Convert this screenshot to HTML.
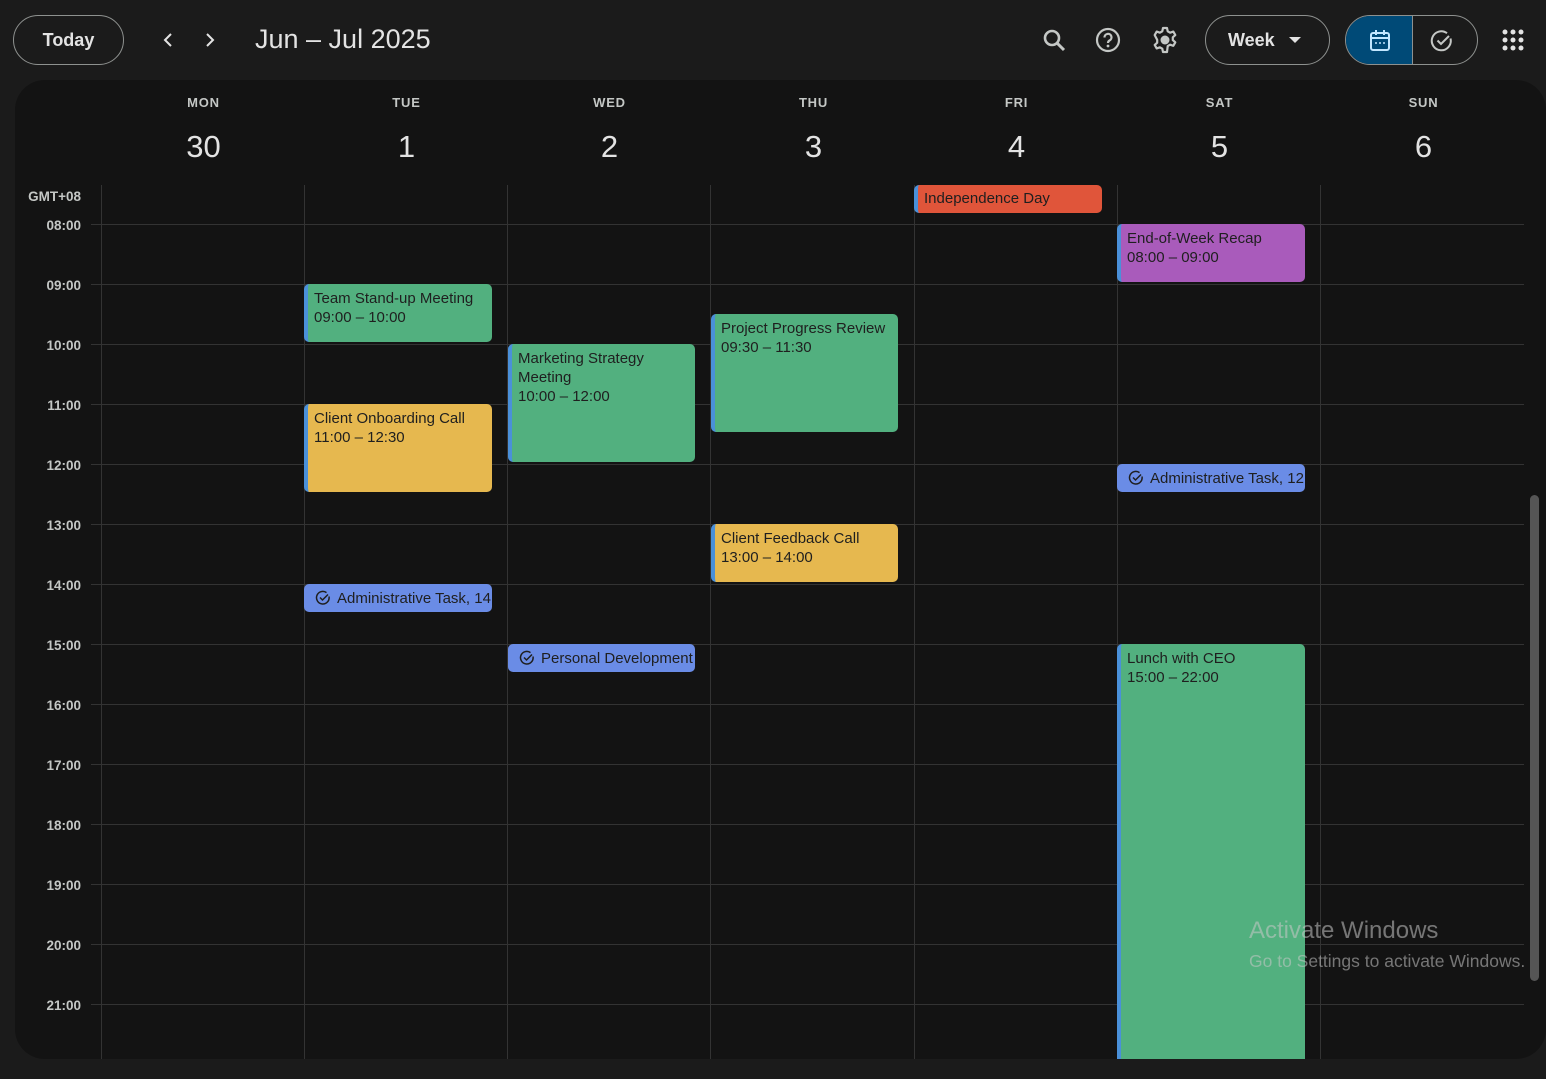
<!DOCTYPE html>
<html><head><style>
*{margin:0;padding:0;box-sizing:border-box}
body{width:1546px;height:1079px;background:#1b1b1b;font-family:"Liberation Sans",sans-serif;position:relative;overflow:hidden;color:#e3e3e3}
.a{position:absolute}
.panel{left:15px;top:80px;width:1531px;height:979px;background:#131313;border-radius:30px 30px 30px 30px}
.hl{position:absolute;left:91px;width:1433px;height:1px;background:#333}
.vl{position:absolute;top:185px;height:874px;width:1px;background:#333}
.tl{position:absolute;left:15px;width:66px;text-align:right;font-size:13.5px;font-weight:bold;color:#c4c7c5}
.dn{position:absolute;width:203px;text-align:center;font-size:13px;font-weight:bold;color:#c4c7c5;top:95px;letter-spacing:.8px}
.dd{position:absolute;width:203px;text-align:center;font-size:31px;color:#e3e3e3;top:129px}
.ev{position:absolute;width:188px;border-radius:5px;border-left:4px solid #4a90d9;padding:5px 0 0 6px;font-size:15px;line-height:19px;color:#1f1f1f;overflow:hidden;white-space:nowrap}
.g{background:#52b07f}.y{background:#e6b84f}.p{background:#a95bbb}
.t{background:#6a8ce6;border-left:none;border-radius:5px;height:28px;padding:0 0 0 11px;display:flex;align-items:center;gap:6px}
.t svg{flex:none}
.btn{position:absolute;border:1px solid #8e918f;border-radius:25px;height:50px}
</style></head><body>
<div class="btn" style="left:13px;top:15px;width:111px;"></div>
<div class="a" style="left:13px;top:30px;width:111px;text-align:center;font-size:18px;font-weight:bold">Today</div>
<svg class="a" style="left:160px;top:31px" width="18" height="18" viewBox="0 0 18 18"><path d="M11 3 5 9l6 6" stroke="#e3e3e3" stroke-width="2" fill="none"/></svg>
<svg class="a" style="left:200px;top:31px" width="18" height="18" viewBox="0 0 18 18"><path d="M7 3l6 6-6 6" stroke="#e3e3e3" stroke-width="2" fill="none"/></svg>
<div class="a" style="left:255px;top:24px;font-size:27px;color:#e3e3e3">Jun – Jul 2025</div>
<svg class="a" style="left:1042px;top:28px" width="26" height="26" viewBox="0 0 26 26"><circle cx="10" cy="10" r="7" stroke="#c4c7c5" stroke-width="2.6" fill="none"/><path d="M15 15l7 7" stroke="#c4c7c5" stroke-width="3"/></svg>
<svg class="a" style="left:1095px;top:27px" width="26" height="26" viewBox="0 0 26 26"><circle cx="13" cy="13" r="11" stroke="#c4c7c5" stroke-width="2.2" fill="none"/><path d="M9.5 10.5a3.5 3.5 0 1 1 5 3c-1.2.7-1.5 1.3-1.5 2.5" stroke="#c4c7c5" stroke-width="2.2" fill="none"/><circle cx="13" cy="19" r="1.4" fill="#c4c7c5"/></svg>
<svg class="a" style="left:1151px;top:26px" width="28" height="28" viewBox="0 0 28 28"><path d="M12 2h4l.7 3.3 2.4 1.4 3.2-1.1 2 3.5-2.5 2.2v2.8l2.5 2.2-2 3.5-3.2-1.1-2.4 1.4L16 26h-4l-.7-3.3-2.4-1.4-3.2 1.1-2-3.5 2.5-2.2v-2.8L3.7 9.1l2-3.5 3.2 1.1 2.4-1.4z" stroke="#c4c7c5" stroke-width="2.2" fill="none" stroke-linejoin="round"/><circle cx="14" cy="14" r="4.5" fill="#c4c7c5"/></svg>
<div class="btn" style="left:1205px;top:15px;width:125px"></div>
<div class="a" style="left:1228px;top:30px;font-size:18px;font-weight:bold">Week</div>
<svg class="a" style="left:1289px;top:36px" width="12" height="8"><path d="M0 1h12L6 7z" fill="#e3e3e3"/></svg>
<div class="btn" style="left:1345px;top:15px;width:133px;overflow:hidden"><div style="position:absolute;left:0;top:0;width:66px;height:50px;background:#004a77"></div><div style="position:absolute;left:66px;top:0;width:1px;height:50px;background:#8e918f"></div></div>
<svg class="a" style="left:1369px;top:29px" width="22" height="24" viewBox="0 0 22 24"><rect x="2" y="4" width="18" height="17" rx="2" stroke="#c2e7ff" stroke-width="2" fill="none"/><path d="M2 9h18M7 1v5M15 1v5" stroke="#c2e7ff" stroke-width="2"/><circle cx="7" cy="14" r="1" fill="#c2e7ff"/><circle cx="11" cy="14" r="1" fill="#c2e7ff"/><circle cx="15" cy="14" r="1" fill="#c2e7ff"/></svg>
<svg class="a" style="left:1430px;top:29px" width="24" height="24" viewBox="0 0 24 24"><path d="M20.5 9.5A9.5 9.5 0 1 1 17 4.2" stroke="#c4c7c5" stroke-width="2" fill="none"/><path d="M7.5 11.5l3.5 3.5 8-8" stroke="#c4c7c5" stroke-width="2" fill="none"/></svg>
<svg class="a" style="left:1502px;top:29px" width="22" height="22" viewBox="0 0 22 22" fill="#e3e3e3"><circle cx="3" cy="3" r="2.5"/><circle cx="11" cy="3" r="2.5"/><circle cx="19" cy="3" r="2.5"/><circle cx="3" cy="11" r="2.5"/><circle cx="11" cy="11" r="2.5"/><circle cx="19" cy="11" r="2.5"/><circle cx="3" cy="19" r="2.5"/><circle cx="11" cy="19" r="2.5"/><circle cx="19" cy="19" r="2.5"/></svg>

<div class="a panel"></div>
<div class="dn" style="left:102px">MON</div><div class="dd" style="left:102px">30</div>
<div class="dn" style="left:305px">TUE</div><div class="dd" style="left:305px">1</div>
<div class="dn" style="left:508px">WED</div><div class="dd" style="left:508px">2</div>
<div class="dn" style="left:712px">THU</div><div class="dd" style="left:712px">3</div>
<div class="dn" style="left:915px">FRI</div><div class="dd" style="left:915px">4</div>
<div class="dn" style="left:1118px">SAT</div><div class="dd" style="left:1118px">5</div>
<div class="dn" style="left:1322px">SUN</div><div class="dd" style="left:1322px">6</div>
<div class="tl" style="top:189px;left:0px;width:81px">GMT+08</div>

<div class="vl" style="left:101px"></div><div class="vl" style="left:304px"></div><div class="vl" style="left:507px"></div><div class="vl" style="left:710px"></div><div class="vl" style="left:914px"></div><div class="vl" style="left:1117px"></div><div class="vl" style="left:1320px"></div>

<div class="hl" style="top:224px"></div><div class="tl" style="top:218px">08:00</div>
<div class="hl" style="top:284px"></div><div class="tl" style="top:278px">09:00</div>
<div class="hl" style="top:344px"></div><div class="tl" style="top:338px">10:00</div>
<div class="hl" style="top:404px"></div><div class="tl" style="top:398px">11:00</div>
<div class="hl" style="top:464px"></div><div class="tl" style="top:458px">12:00</div>
<div class="hl" style="top:524px"></div><div class="tl" style="top:518px">13:00</div>
<div class="hl" style="top:584px"></div><div class="tl" style="top:578px">14:00</div>
<div class="hl" style="top:644px"></div><div class="tl" style="top:638px">15:00</div>
<div class="hl" style="top:704px"></div><div class="tl" style="top:698px">16:00</div>
<div class="hl" style="top:764px"></div><div class="tl" style="top:758px">17:00</div>
<div class="hl" style="top:824px"></div><div class="tl" style="top:818px">18:00</div>
<div class="hl" style="top:884px"></div><div class="tl" style="top:878px">19:00</div>
<div class="hl" style="top:944px"></div><div class="tl" style="top:938px">20:00</div>
<div class="hl" style="top:1004px"></div><div class="tl" style="top:998px">21:00</div>

<div class="ev" style="left:914px;top:185px;height:28px;background:#e0553a;padding-top:4px;width:188px">Independence Day</div>
<div class="ev p" style="left:1117px;top:224px;height:58px">End-of-Week Recap<br>08:00 – 09:00</div>
<div class="ev g" style="left:304px;top:284px;height:58px">Team Stand-up Meeting<br>09:00 – 10:00</div>
<div class="ev g" style="left:711px;top:314px;height:118px;width:187px">Project Progress Review<br>09:30 – 11:30</div>
<div class="ev g" style="left:508px;top:344px;height:118px;width:187px;white-space:normal;padding-right:20px">Marketing Strategy Meeting<br>10:00 – 12:00</div>
<div class="ev y" style="left:304px;top:404px;height:88px">Client Onboarding Call<br>11:00 – 12:30</div>
<div class="ev y" style="left:711px;top:524px;height:58px;width:187px">Client Feedback Call<br>13:00 – 14:00</div>
<div class="ev g" style="left:1117px;top:644px;height:415px;border-radius:5px 5px 0 0">Lunch with CEO<br>15:00 – 22:00</div>

<div class="ev t" style="left:1117px;top:464px"><svg width="16" height="16" viewBox="0 0 16 16"><path d="M14 6.5A6.3 6.3 0 1 1 11.5 2.6" stroke="#1f1f1f" stroke-width="1.5" fill="none"/><path d="M5 7.5l2.5 2.5 5.5-5.5" stroke="#1f1f1f" stroke-width="1.5" fill="none"/></svg>Administrative Task, 12:00</div>
<div class="ev t" style="left:304px;top:584px"><svg width="16" height="16" viewBox="0 0 16 16"><path d="M14 6.5A6.3 6.3 0 1 1 11.5 2.6" stroke="#1f1f1f" stroke-width="1.5" fill="none"/><path d="M5 7.5l2.5 2.5 5.5-5.5" stroke="#1f1f1f" stroke-width="1.5" fill="none"/></svg>Administrative Task, 14:00</div>
<div class="ev t" style="left:508px;top:644px;width:187px"><svg width="16" height="16" viewBox="0 0 16 16"><path d="M14 6.5A6.3 6.3 0 1 1 11.5 2.6" stroke="#1f1f1f" stroke-width="1.5" fill="none"/><path d="M5 7.5l2.5 2.5 5.5-5.5" stroke="#1f1f1f" stroke-width="1.5" fill="none"/></svg>Personal Development</div>

<div class="a" style="left:1530px;top:495px;width:9px;height:486px;background:#555;border-radius:5px"></div>
<div class="a" style="left:1249px;top:917px;font-size:24px;color:rgba(200,200,200,.55)">Activate Windows</div>
<div class="a" style="left:1249px;top:951px;font-size:17.5px;color:rgba(200,200,200,.55)">Go to Settings to activate Windows.</div>
</body></html>
